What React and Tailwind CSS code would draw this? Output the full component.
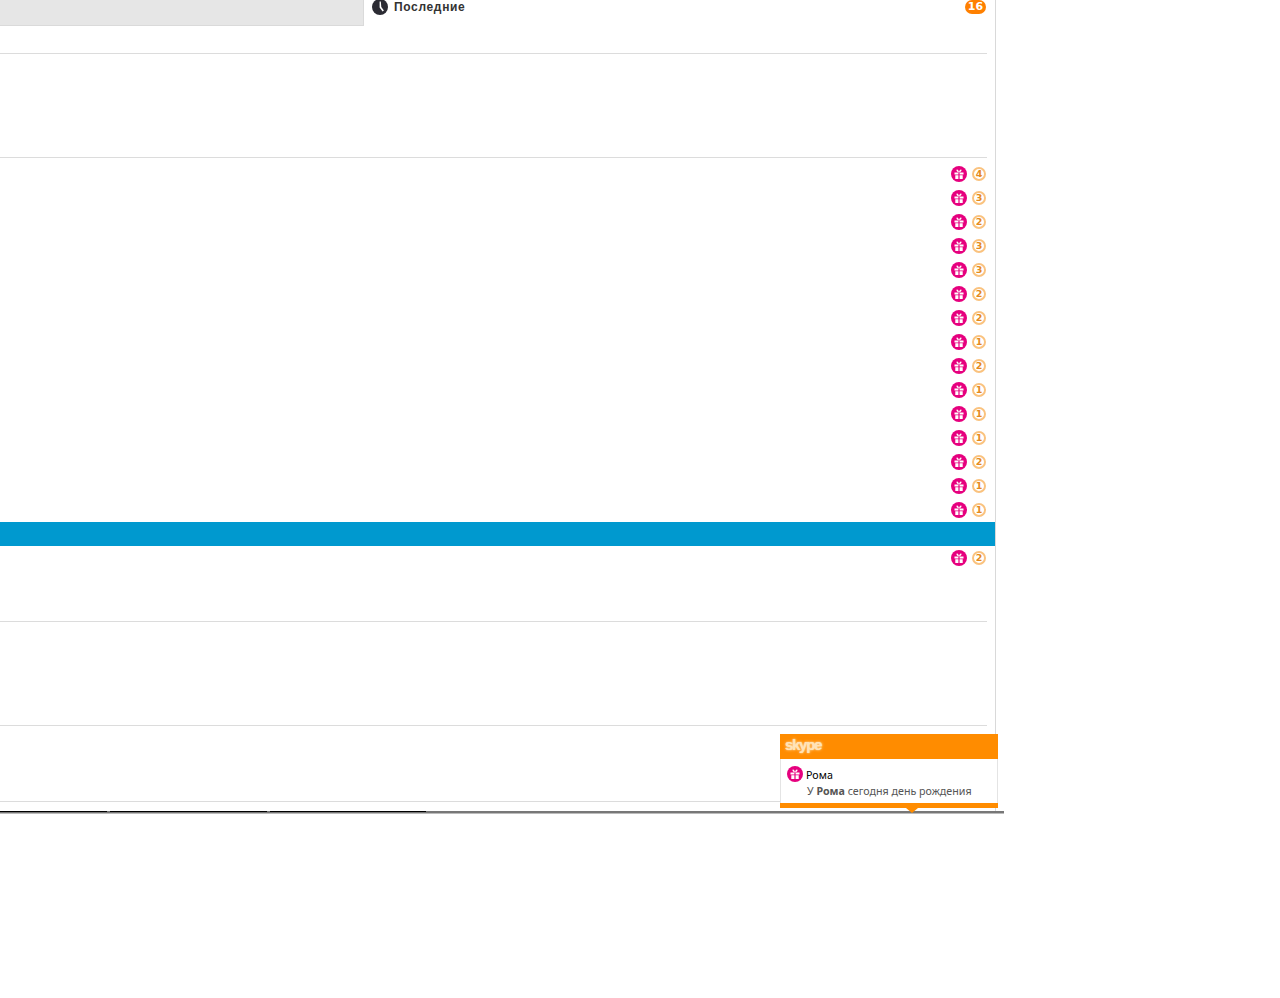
import React from 'react';

const rows = [4, 3, 2, 3, 3, 2, 2, 1, 2, 1, 1, 1, 2, 1, 1, null, 2];

function GiftIcon({ className }) {
  return (
    <svg viewBox="0 0 16 16" className={className}>
      <circle cx="8" cy="8" r="8" fill="#e6007e" />
      <path d="M3.5 6.6h9v1.8h-9zM4.3 9.2h7.4V13H4.3z" fill="#fff" />
      <path d="M7.4 6.6V13h1.2V6.6z" fill="#e6007e" />
      <path d="M8 6.2C6.6 6 5 5.2 5.6 3.8 6.4 2.8 7.6 4.4 8 6.2zM8 6.2c1.4-.2 3-1 2.4-2.4C9.6 2.8 8.4 4.4 8 6.2z" fill="#fff" />
    </svg>
  );
}

function ClockIcon() {
  return (
    <svg viewBox="0 0 16 16" className="w-4 h-4 shrink-0">
      <circle cx="8" cy="8" r="8" fill="#2b2b33" />
      <path d="M7.6 2.6h1.2l.5 5.3 2.6 3.5-1.3 1-3-3.9z" fill="#fff" />
    </svg>
  );
}

function Row({ count }) {
  if (count === null) return <div className="h-6 -mr-2 bg-[#0099cf]" />;
  return (
    <div className="h-6 flex items-center justify-end gap-[5px] pr-px">
      <GiftIcon className="w-4 h-4" />
      <span className="w-[14px] h-[14px] rounded-full border-2 border-[#fac27e] bg-white flex items-center justify-center text-[9.5px] leading-none font-bold text-[#e58a1c] font-['DejaVu_Sans',sans-serif]">
        {count}
      </span>
    </div>
  );
}

function SkypePopup() {
  return (
    <div className="absolute left-[780px] top-[734px] w-[218px] h-[74px] bg-white border border-[#e4e4e4] border-t-0 border-b-0">
      <div className="h-[25px] -mx-px bg-[#ff8c00] flex items-start pl-[5px] pt-[2px]">
        <span className="text-[15px] leading-[18px] font-bold tracking-[-1.3px] text-[#ffe3b8] font-['Liberation_Sans',sans-serif] [text-shadow:0_0_1px_#ffe3b8,0_0_3px_#ffd9a0]">
          skype
        </span>
      </div>
      <div className="h-[44px] pl-[6px] pt-[7px] font-['Noto_Sans',sans-serif] text-[10.7px]">
        <div className="flex items-center gap-[3px] h-4 text-black">
          <GiftIcon className="w-4 h-4" />
          <span className="pt-[2px]">Рома</span>
        </div>
        <div className="pl-5 mt-[2px] leading-[14px] text-[#555] whitespace-nowrap">
          У <b>Рома</b> сегодня день рождения
        </div>
      </div>
      <div className="h-[5px] -mx-px bg-[#ff8c00]" />
      <div className="absolute left-[125px] top-[74px] w-0 h-0 border-x-[6px] border-x-transparent border-t-[5px] border-t-[#ff8c00]" />
    </div>
  );
}

export default function App() {
  return (
    <div className="relative h-[998px] bg-white font-['Liberation_Sans',sans-serif] overflow-hidden">
      <div className="w-[996px] h-[811px] border-r border-[#d9d9d9] pr-2">
        <div className="h-[54px] border-b border-[#dcdcdc] flex items-start">
          <div className="w-[364px] h-[26px] bg-[#e6e6e6] border-r border-b border-[#dadada]" />
          <div className="flex-1 h-[13px] flex items-center pl-2 pr-px">
            <ClockIcon />
            <span className="ml-[6px] text-[12px] font-bold tracking-[0.65px] text-[#333]">Последние</span>
            <span className="ml-auto w-[21px] h-[14px] rounded-full bg-[#ff8000] text-white text-[11px] leading-[14px] font-bold text-center font-['DejaVu_Sans',sans-serif]">
              16
            </span>
          </div>
        </div>
        <div className="h-[104px] border-b border-[#dcdcdc]" />
        <div className="h-[464px] pt-1 border-b border-[#dcdcdc]">
          {rows.map((count, i) => (
            <Row key={i} count={count} />
          ))}
        </div>
        <div className="h-[104px] border-b border-[#dcdcdc]" />
        <div className="h-[76px] border-b border-[#dcdcdc]" />
      </div>
      <div className="w-[1004px] h-[3px] bg-[#777] border-b border-[#bbb] flex items-start">
        <div className="w-[107px] h-px bg-black" />
        <div className="w-[3px]" />
        <div className="w-[157px] h-px bg-black" />
        <div className="w-[3px]" />
        <div className="w-[156px] h-px bg-black" />
      </div>
      <SkypePopup />
    </div>
  );
}
